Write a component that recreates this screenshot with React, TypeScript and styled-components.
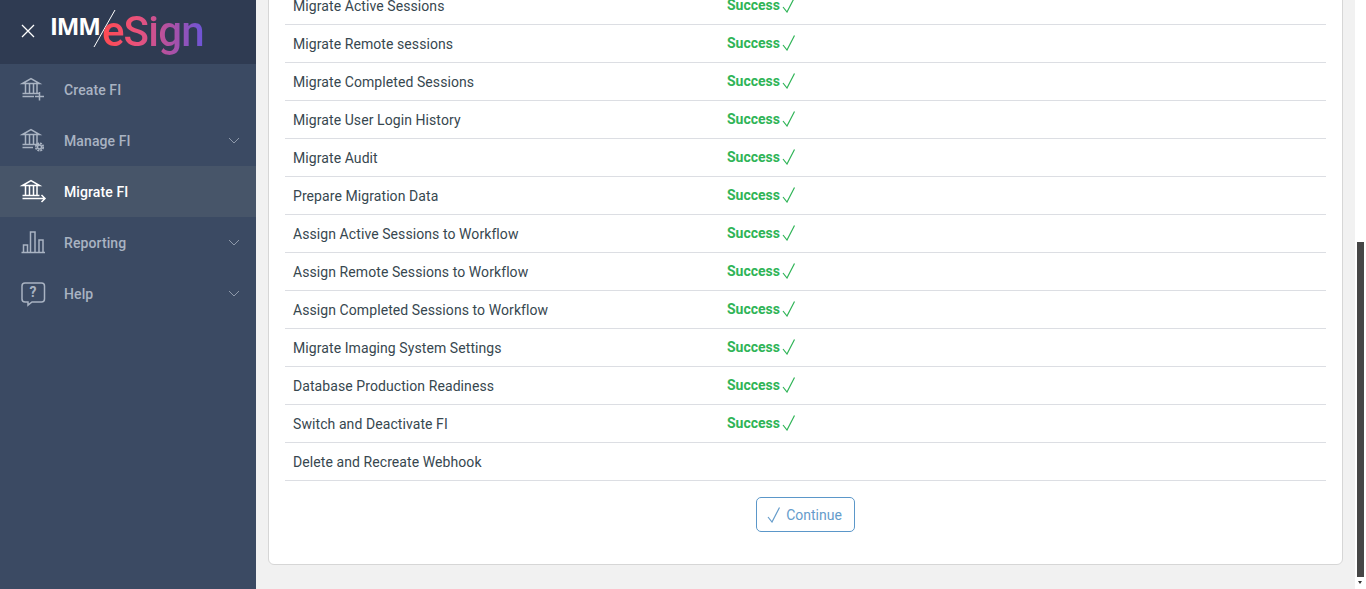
import React from "react";
import styled, { createGlobalStyle } from "styled-components";

const GlobalStyle = createGlobalStyle`
  html, body {
    margin: 0;
    height: 100%;
    overflow: hidden;
    background: #f1f1f1;
    font-family: Roboto, "Liberation Sans", sans-serif;
  }
`;

const steps = [
  { name: "Migrate Active Sessions", done: true },
  { name: "Migrate Remote sessions", done: true },
  { name: "Migrate Completed Sessions", done: true },
  { name: "Migrate User Login History", done: true },
  { name: "Migrate Audit", done: true },
  { name: "Prepare Migration Data", done: true },
  { name: "Assign Active Sessions to Workflow", done: true },
  { name: "Assign Remote Sessions to Workflow", done: true },
  { name: "Assign Completed Sessions to Workflow", done: true },
  { name: "Migrate Imaging System Settings", done: true },
  { name: "Database Production Readiness", done: true },
  { name: "Switch and Deactivate FI", done: true },
  { name: "Delete and Recreate Webhook", done: false },
];

const BankBase = () => (
  <>
    <path d="M5.500 9.500 14 4.700l8.500 4.800Z" />
    <path d="M8.500 10v9M12.500 10v9M16.500 10v9M20 10v9" />
    <path d="M5.500 19.500h17" />
  </>
);

const CreateIcon = () => (
  <NavSvg viewBox="0 0 32 32">
    <BankBase />
    <path d="M5.500 22.500h11.500M22.500 18v8.500M18 22.500h9" />
  </NavSvg>
);

const ManageIcon = () => (
  <NavSvg viewBox="0 0 32 32">
    <BankBase />
    <path d="M5.500 22.500h10.500" />
    <circle cx="22.500" cy="22" r="2" />
    <circle cx="22.500" cy="22" r="3.700" strokeDasharray="2 0.900" strokeWidth="1.800" />
  </NavSvg>
);

const MigrateIcon = () => (
  <NavSvg viewBox="0 0 32 32">
    <BankBase />
    <path d="M5.500 22.500H28M24.500 19l3.500 3.500-3.500 3.500" />
  </NavSvg>
);

const ReportingIcon = () => (
  <NavSvg viewBox="0 0 32 32">
    <path d="M4.500 25.500H28M6.500 25v-7H10.500v7M13.500 25V5H18v20M22 25V13h4v12" />
  </NavSvg>
);

const HelpIcon = () => (
  <NavSvg viewBox="0 0 32 32">
    <path d="M8 5h16.500a3 3 0 0 1 3 3v13a3 3 0 0 1-3 3H15l-4 3.200V24H8a3 3 0 0 1-3-3V8a3 3 0 0 1 3-3Z" />
    <HelpMark x="16" y="19">?</HelpMark>
  </NavSvg>
);

const Chevron = () => (
  <ChevronSvg viewBox="0 0 12 7">
    <path d="M1 1l5 5 5-5" />
  </ChevronSvg>
);

const Tick = ({ className }: { className?: string }) => (
  <svg className={className} viewBox="0 0 14 16">
    <path d="M1 10l4 5L12.500 .5" />
  </svg>
);

const navItems = [
  { label: "Create FI", icon: <CreateIcon /> },
  { label: "Manage FI", icon: <ManageIcon />, arrow: true },
  { label: "Migrate FI", icon: <MigrateIcon />, active: true },
  { label: "Reporting", icon: <ReportingIcon />, arrow: true },
  { label: "Help", icon: <HelpIcon />, arrow: true },
];

export default function App() {
  return (
    <Page>
      <GlobalStyle />
      <Sidebar>
        <Brand>
          <CloseIcon viewBox="0 0 14 14">
            <path d="M1 1l12 12M13 1 1 13" />
          </CloseIcon>
          <Logo>
            <LogoImm>IMM</LogoImm>
            <LogoSlash viewBox="0 0 24 40">
              <path d="M22 1 1 38" />
            </LogoSlash>
            <LogoSign>eSign</LogoSign>
          </Logo>
        </Brand>
        <Nav>
          {navItems.map((item) => (
            <NavItem key={item.label} $active={item.active}>
              <NavIconSlot>{item.icon}</NavIconSlot>
              <NavLabel>{item.label}</NavLabel>
              {item.arrow && <Chevron />}
            </NavItem>
          ))}
        </Nav>
      </Sidebar>
      <Main>
        <Card>
          <StepList>
            {steps.map((step) => (
              <StepRow key={step.name}>
                <StepName>{step.name}</StepName>
                {step.done && (
                  <StepStatus>
                    Success
                    <StatusTick />
                  </StepStatus>
                )}
              </StepRow>
            ))}
          </StepList>
          <Actions>
            <ContinueButton>
              <ButtonTick />
              Continue
            </ContinueButton>
          </Actions>
        </Card>
      </Main>
      <Scrollbar>
        <ScrollThumb />
        <ScrollArrow />
      </Scrollbar>
    </Page>
  );
}

const Page = styled.div`
  display: flex;
  height: 589px;
  overflow: hidden;
`;

const Sidebar = styled.aside`
  flex: 0 0 256px;
  background: #3b4a63;
`;

const Brand = styled.div`
  display: flex;
  align-items: flex-start;
  height: 64px;
  padding-left: 21px;
  box-sizing: border-box;
  background: #2f3b52;
`;

const CloseIcon = styled.svg`
  width: 14px;
  height: 14px;
  margin-top: 24px;
  fill: none;
  stroke: #fff;
  stroke-width: 1.300;
`;

const Logo = styled.div`
  display: flex;
  align-items: flex-start;
  margin-left: 15px;
  height: 64px;
`;

const LogoImm = styled.span`
  margin-top: 12px;
  font-family: "Open Sans", sans-serif;
  font-size: 24px;
  line-height: 28px;
  font-weight: 700;
  letter-spacing: -1.100px;
  color: #fff;
`;

const LogoSlash = styled.svg`
  width: 24px;
  height: 40px;
  margin: 9px 0 0 -7px;
  fill: none;
  stroke: #fff;
  stroke-width: 1;
`;

const LogoSign = styled.span`
  margin: 7px 0 0 -15px;
  font-family: Roboto, sans-serif;
  font-size: 42px;
  line-height: 50px;
  font-weight: 500;
  letter-spacing: -0.800px;
  background: linear-gradient(90deg, #ff4a50 0%, #e9527c 35%, #a851a8 70%, #6b55d8 100%);
  -webkit-background-clip: text;
  background-clip: text;
  color: transparent;
`;

const Nav = styled.nav`
  display: flex;
  flex-direction: column;
`;

const NavItem = styled.div<{ $active?: boolean }>`
  display: flex;
  align-items: center;
  height: 51px;
  padding: 0 16px 0 17px;
  color: ${(p) => (p.$active ? "#ffffff" : "#a9b3c2")};
  background: ${(p) => (p.$active ? "#475569" : "transparent")};
`;

const NavIconSlot = styled.span`
  display: flex;
  flex: 0 0 47px;
  margin-top: 1px;
`;

const NavSvg = styled.svg`
  width: 32px;
  height: 32px;
  fill: none;
  stroke: currentColor;
  stroke-width: 1.500;
`;

const HelpMark = styled.text`
  font-size: 14px;
  font-weight: 700;
  text-anchor: middle;
  fill: currentColor;
  stroke: none;
`;

const NavLabel = styled.span`
  flex: 1;
  font-size: 14px;
  font-weight: 500;
  letter-spacing: 0.100px;
`;

const ChevronSvg = styled.svg`
  width: 12px;
  height: 7px;
  fill: none;
  stroke: #8e99aa;
  stroke-width: 1;
`;

const Main = styled.main`
  flex: 1;
  display: flex;
  flex-direction: column;
  justify-content: flex-end;
  min-width: 0;
  height: 589px;
  padding: 0 12px 24px;
  box-sizing: border-box;
  overflow: hidden;
`;

const Card = styled.section`
  flex: none;
  padding: 0 16px 32px;
  background: #fff;
  border: 1px solid #d6d6d6;
  border-radius: 6px;
`;

const StepList = styled.div`
  display: flex;
  flex-direction: column;
`;

const StepRow = styled.div`
  display: flex;
  align-items: center;
  height: 38px;
  padding-left: 8px;
  box-sizing: border-box;
  border-bottom: 1px solid #dcdee3;
`;

const StepName = styled.span`
  flex: 0 0 434px;
  font-size: 14px;
  letter-spacing: 0.080px;
  color: #37474f;
`;

const StepStatus = styled.span`
  display: flex;
  align-items: center;
  margin-top: -1px;
  font-size: 14px;
  font-weight: 700;
  color: #2fb457;
`;

const StatusTick = styled(Tick)`
  width: 14px;
  height: 16px;
  margin-left: 2px;
  fill: none;
  stroke: #2fb457;
  stroke-width: 1.200;
`;

const Actions = styled.div`
  display: flex;
  justify-content: center;
  padding-top: 16px;
`;

const ContinueButton = styled.button`
  display: flex;
  align-items: center;
  justify-content: center;
  gap: 5px;
  width: 99px;
  height: 35px;
  padding: 0 2px 0 0;
  font-family: inherit;
  font-size: 14px;
  color: #659ccb;
  background: #fff;
  border: 1px solid #5b97c9;
  border-radius: 5px;
`;

const ButtonTick = styled(Tick)`
  width: 14px;
  height: 16px;
  fill: none;
  stroke: #659ccb;
  stroke-width: 1.200;
`;

const Scrollbar = styled.div`
  position: relative;
  flex: 0 0 11px;
  background: #fff;
`;

const ScrollThumb = styled.div`
  position: absolute;
  top: 242px;
  left: 2px;
  width: 7px;
  height: 335px;
  background: #464646;
`;

const ScrollArrow = styled.div`
  position: absolute;
  top: 581px;
  left: 3px;
  border-left: 2.500px solid transparent;
  border-right: 2.500px solid transparent;
  border-top: 3px solid #333;
`;
